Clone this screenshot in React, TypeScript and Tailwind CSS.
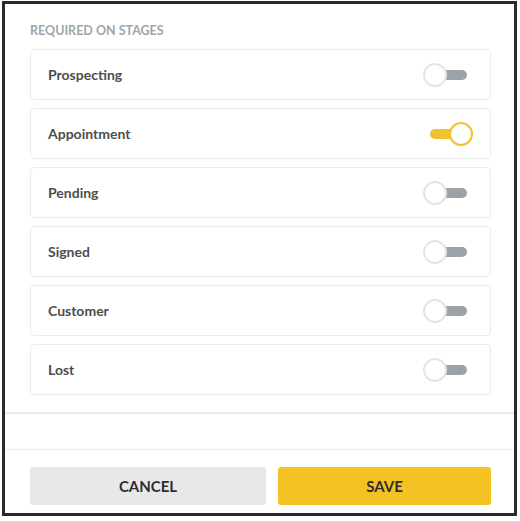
const stages = [
  { name: "Prospecting", on: false },
  { name: "Appointment", on: true },
  { name: "Pending", on: false },
  { name: "Signed", on: false },
  { name: "Customer", on: false },
  { name: "Lost", on: false },
];

function Toggle({ on }: { on: boolean }) {
  return (
    <div className="relative w-[50px] h-[24px]">
      <div
        className={
          on
            ? "absolute left-[7px] right-[6px] top-[7px] h-[10px] rounded-full bg-[#f2c12e]"
            : "absolute left-[7px] right-[6px] top-[7px] h-[10px] rounded-full bg-[#9ca2a6]"
        }
      />
      <div
        className={
          on
            ? "absolute right-0 top-0 w-[24px] h-[24px] rounded-full bg-white border-2 border-[#f2c12e]"
            : "absolute left-0 top-0 w-[24px] h-[24px] rounded-full bg-white border-2 border-[#e3e5e6]"
        }
      />
    </div>
  );
}

export default function App() {
  return (
    <div
      className="w-[520px] h-[521px] bg-white pt-[1px] pl-[2px]"
      style={{ fontFamily: "Lato, 'Open Sans', sans-serif" }}
    >
      <div className="w-[515px] h-[515px] border-[3px] border-[#2a2a2a] bg-white flex flex-col">
        <div className="pl-[25px] pr-[23px] pt-[19px]">
          <div className="text-[12.5px] leading-[16px] font-bold text-[#9ea6aa]">
            REQUIRED ON STAGES
          </div>
          <div className="mt-[10px] flex flex-col gap-[8px]">
            {stages.map((s) => (
              <div
                key={s.name}
                className="h-[51px] rounded-[4px] border border-[#ececec] flex items-center justify-between pl-[17px] pr-[17px]"
              >
                <span className="text-[14px] font-bold text-[#4d4d4d]">
                  {s.name}
                </span>
                <Toggle on={s.on} />
              </div>
            ))}
          </div>
        </div>
        <div className="mt-[17px] border-t-2 border-[#ececec] h-[37px]" />
        <div className="border-t border-[#ececec] pl-[25px] pr-[23px] pt-[17px] flex gap-[12px]">
          <button className="w-[236px] h-[38px] rounded-[3px] bg-[#e8e8e8] text-[15px] font-bold text-[#2e2e2e]">
            CANCEL
          </button>
          <button className="flex-1 h-[38px] rounded-[3px] bg-[#f4c323] text-[15px] font-bold text-[#2e2e2e]">
            SAVE
          </button>
        </div>
      </div>
    </div>
  );
}
